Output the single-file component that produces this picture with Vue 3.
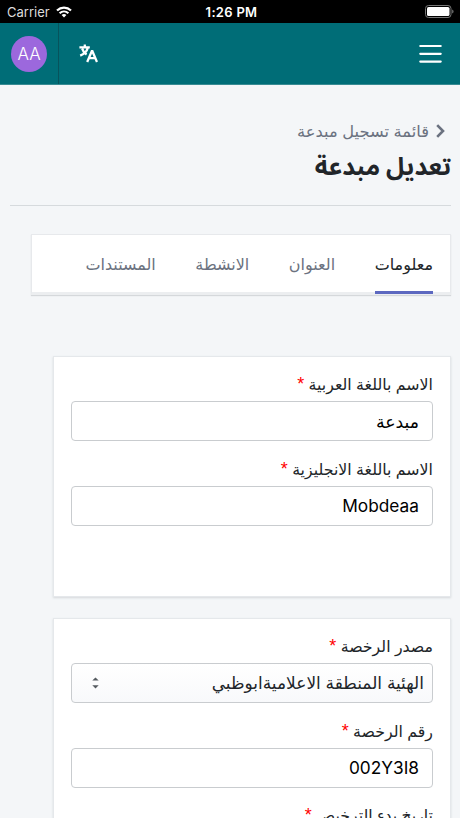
<script setup>
import { ref } from "vue";

const tabs = ["معلومات", "العنوان", "الانشطة", "المستندات"];
const active = ref(0);

const form = ref({
  nameAr: "مبدعة",
  nameEn: "Mobdeaa",
  license: "002Y3I8",
});
</script>

<template>
  <div class="page">
    <div class="status" dir="ltr">
      <div class="carrier">
        <span>Carrier</span>
        <svg width="16" height="12" viewBox="0 0 16 12" fill="none" stroke="#fff" stroke-width="2.2">
          <path d="M1 4.5C5 .7 11 .7 15 4.5" />
          <path d="M3.6 7.2c2.5-2.3 6.3-2.3 8.8 0" />
          <path d="M5.6 9 8 11.6 10.4 9C9 7.8 7 7.8 5.6 9z" fill="#fff" stroke="none" />
        </svg>
      </div>
      <span class="time">1:26 PM</span>
      <svg class="battery" width="29" height="13" viewBox="0 0 29 13">
        <rect x=".5" y=".5" width="25.5" height="12" rx="3" fill="none" stroke="#777" />
        <rect x="2" y="2" width="22.5" height="9" rx="1.6" fill="#fff" />
        <path d="M27.2 4.5v4c1.8-.7 1.8-3.3 0-4z" fill="#777" />
      </svg>
    </div>

    <header class="topbar" dir="ltr">
      <div class="user"><span class="avatar">AA</span></div>
      <svg class="lang" width="19" height="19" viewBox="0 0 19 19" fill="none" stroke="#fff" stroke-width="2.3">
        <path d="M.4 3.4h10.4M5.8.4v3M8.8 3.8C8 7.2 5 10 1.2 11.6M3.2 4.6c.6 2.4 2 4.3 4.4 5.8" />
        <path d="M8.2 18 12.8 7.2h.6L18 18M10 14.2h6.4" />
      </svg>
      <svg class="menu" width="23" height="20" viewBox="0 0 23 20" stroke="#fff" stroke-width="2.2" stroke-linecap="round">
        <path d="M1.3 2h20.4M1.3 9.8h20.4M1.3 17.6h20.4" />
      </svg>
    </header>

    <main class="content">
      <div class="crumb">
        <svg width="9" height="14" viewBox="0 0 9 14" fill="none" stroke="#6b7280" stroke-width="2.6">
          <path d="M1.2 1.2 7 7l-5.8 5.8" />
        </svg>
        <span>قائمة تسجيل مبدعة</span>
      </div>
      <h1 class="title">تعديل مبدعة</h1>

      <nav class="tabs">
        <a
          v-for="(tab, i) in tabs"
          :key="tab"
          class="tab"
          :class="{ active: active === i }"
          @click="active = i"
        >{{ tab }}</a>
      </nav>

      <section class="card names">
        <label class="label">الاسم باللغة العربية <i>*</i></label>
        <input v-model="form.nameAr" class="field" />
        <label class="label">الاسم باللغة الانجليزية <i>*</i></label>
        <input v-model="form.nameEn" class="field" />
      </section>

      <section class="card">
        <label class="label">مصدر الرخصة <i>*</i></label>
        <div class="field select">
          <span>الهئية المنطقة الاعلاميةابوظبي</span>
          <svg width="7" height="12" viewBox="0 0 7 12" fill="#555b60">
            <path d="M.3 3.6 3.5.4l3.2 3.2zM.3 8.2l3.2 3.2 3.2-3.2z" />
          </svg>
        </div>
        <label class="label">رقم الرخصة <i>*</i></label>
        <input v-model="form.license" class="field" />
        <label class="label">تاريخ بدء الترخيص <i>*</i></label>
        <input class="field" />
      </section>
    </main>
  </div>
</template>

<style>
body {
  margin: 0;
  overflow: hidden;
}
</style>

<style scoped>
.page {
  height: 818px;
  overflow: hidden;
  direction: rtl;
  background: #f4f6f8;
  color: #212529;
  font-family: "Liberation Sans", "DejaVu Sans", sans-serif;
}
.page * {
  box-sizing: border-box;
}
.status {
  height: 23px;
  display: grid;
  grid-template-columns: 1fr auto 1fr;
  align-items: center;
  padding: 0 6px 0 7px;
  background: #000;
  color: #fff;
  font-family: Inter, sans-serif;
  font-size: 13px;
}
.carrier {
  display: flex;
  align-items: center;
  gap: 6px;
}
.carrier span {
  color: #ddd;
}
.time {
  padding-left: 2px;
  font-weight: 600;
  letter-spacing: 0.3px;
}
.battery {
  justify-self: end;
}
.topbar {
  height: 62px;
  display: flex;
  align-items: center;
  padding-right: 18px;
  background: #006d77;
  border-bottom: 1px solid #388b93;
}
.user {
  width: 59px;
  height: 61px;
  padding: 13px 0 0 11px;
  border-right: 1px solid #07535c;
}
.avatar {
  display: block;
  width: 36px;
  height: 36px;
  line-height: 36px;
  border-radius: 50%;
  background: #9c68dd;
  color: #fff;
  font-family: Inter, sans-serif;
  font-size: 17px;
  font-weight: 300;
  text-align: center;
}
.lang {
  margin-left: 20px;
}
.menu {
  margin-left: auto;
}
.content {
  padding: 35px 9px 0 10px;
}
.crumb {
  height: 22px;
  display: flex;
  align-items: center;
  gap: 7px;
  padding-right: 6px;
  color: #6b7280;
  font-size: 16.3px;
}
.title {
  height: 64px;
  margin: 0;
  line-height: 48px;
  border-bottom: 1px solid #d6dadd;
  font-family: Inter, "Noto Sans Arabic", "DejaVu Sans", sans-serif;
  font-size: 24.7px;
  font-weight: 700;
}
.tabs {
  height: 61px;
  display: flex;
  gap: 39.5px;
  margin: 28px 0 0 21px;
  padding: 0 17px;
  background: #fff;
  border: 1px solid #e7e9ec;
  border-bottom: 3px solid #eceef0;
  box-shadow: 0 1px 1px #d5d8db;
}
.tab {
  height: 59px;
  line-height: 59px;
  color: #6b7280;
  font-size: 16px;
}
.active {
  color: #212529;
  border-bottom: 3px solid #5c68c0;
}
.card {
  margin: 21px 0 0 43px;
  padding: 16px 17px;
  background: #fff;
  border: 1px solid #e5e8eb;
  box-shadow: 0 1px 2px #d5d8db;
}
.names {
  height: 241px;
  margin-top: 61px;
}
.label {
  display: block;
  height: 24px;
  line-height: 24px;
  margin-bottom: 4px;
  font-size: 15.8px;
  white-space: nowrap;
}
.label i {
  color: #f00;
  font-size: 18px;
  font-style: normal;
  line-height: 1;
}
.field {
  display: block;
  width: 100%;
  height: 40px;
  margin: 0 0 16.6px;
  padding: 0 13px;
  border: 1px solid #c9cccf;
  border-radius: 4px;
  background: #fff;
  color: #000;
  font-family: Inter, "DejaVu Sans", sans-serif;
  font-size: 17.3px;
  outline: none;
}
.select {
  display: flex;
  align-items: center;
  justify-content: space-between;
  padding: 0 8px 0 20px;
  background: linear-gradient(#fff, #f8f9fb);
  color: #212529;
  font-size: 17px;
}
</style>
